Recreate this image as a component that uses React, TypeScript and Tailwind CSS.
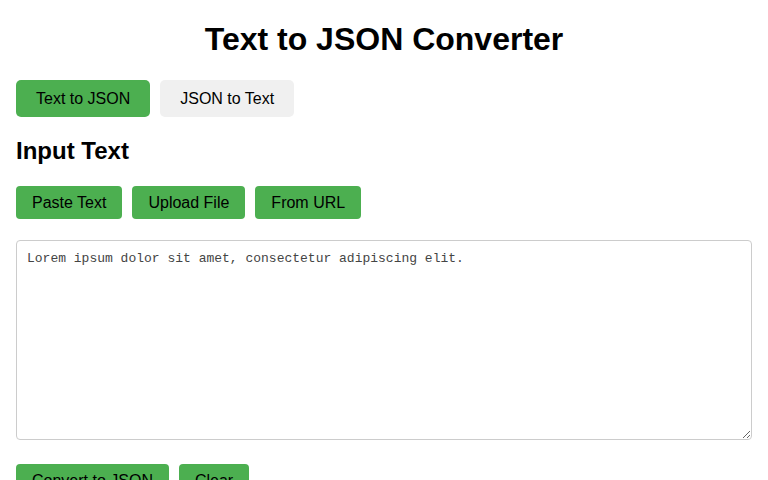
import React from "react";

export default function App() {
  const sans = { fontFamily: '"Liberation Sans", Arial, sans-serif' };
  return (
    <div className="bg-white min-h-[480px] px-4 text-black" style={sans}>
      <h1 className="text-[32px] leading-[37px] font-bold text-center my-[21.44px]">Text to JSON Converter</h1>
      <div className="flex gap-[10px]">
        <button className="bg-[#4caf50] text-black text-base leading-[17px] px-5 py-[10px] rounded-[5px]">Text to JSON</button>
        <button className="bg-[#f0f0f0] text-black text-base leading-[17px] px-5 py-[10px] rounded-[5px]">JSON to Text</button>
      </div>
      <h2 className="text-[24px] leading-[28px] font-bold mt-[20px] mb-[21px]">Input Text</h2>
      <div className="flex gap-[10px]">
        <button className="bg-[#4caf50] text-black text-base leading-[17px] px-4 py-2 rounded-[4px]">Paste Text</button>
        <button className="bg-[#4caf50] text-black text-base leading-[17px] px-4 py-2 rounded-[4px]">Upload File</button>
        <button className="bg-[#4caf50] text-black text-base leading-[17px] px-4 py-2 rounded-[4px]">From URL</button>
      </div>
      <textarea
        className="block w-full h-[200px] mt-[21px] border border-[#ccc] rounded-[4px] px-[10px] py-[10px] text-[13px] leading-[16px] text-[#444] resize-y outline-none"
        style={{ fontFamily: '"Liberation Mono", "Courier New", monospace' }}
        defaultValue="Lorem ipsum dolor sit amet, consectetur adipiscing elit."
      />
      <div className="flex gap-[10px] mt-6">
        <button className="bg-[#4caf50] text-black text-base leading-[17px] px-4 py-2 rounded-[4px]">Convert to JSON</button>
        <button className="bg-[#4caf50] text-black text-base leading-[17px] px-4 py-2 rounded-[4px]">Clear</button>
      </div>
    </div>
  );
}
